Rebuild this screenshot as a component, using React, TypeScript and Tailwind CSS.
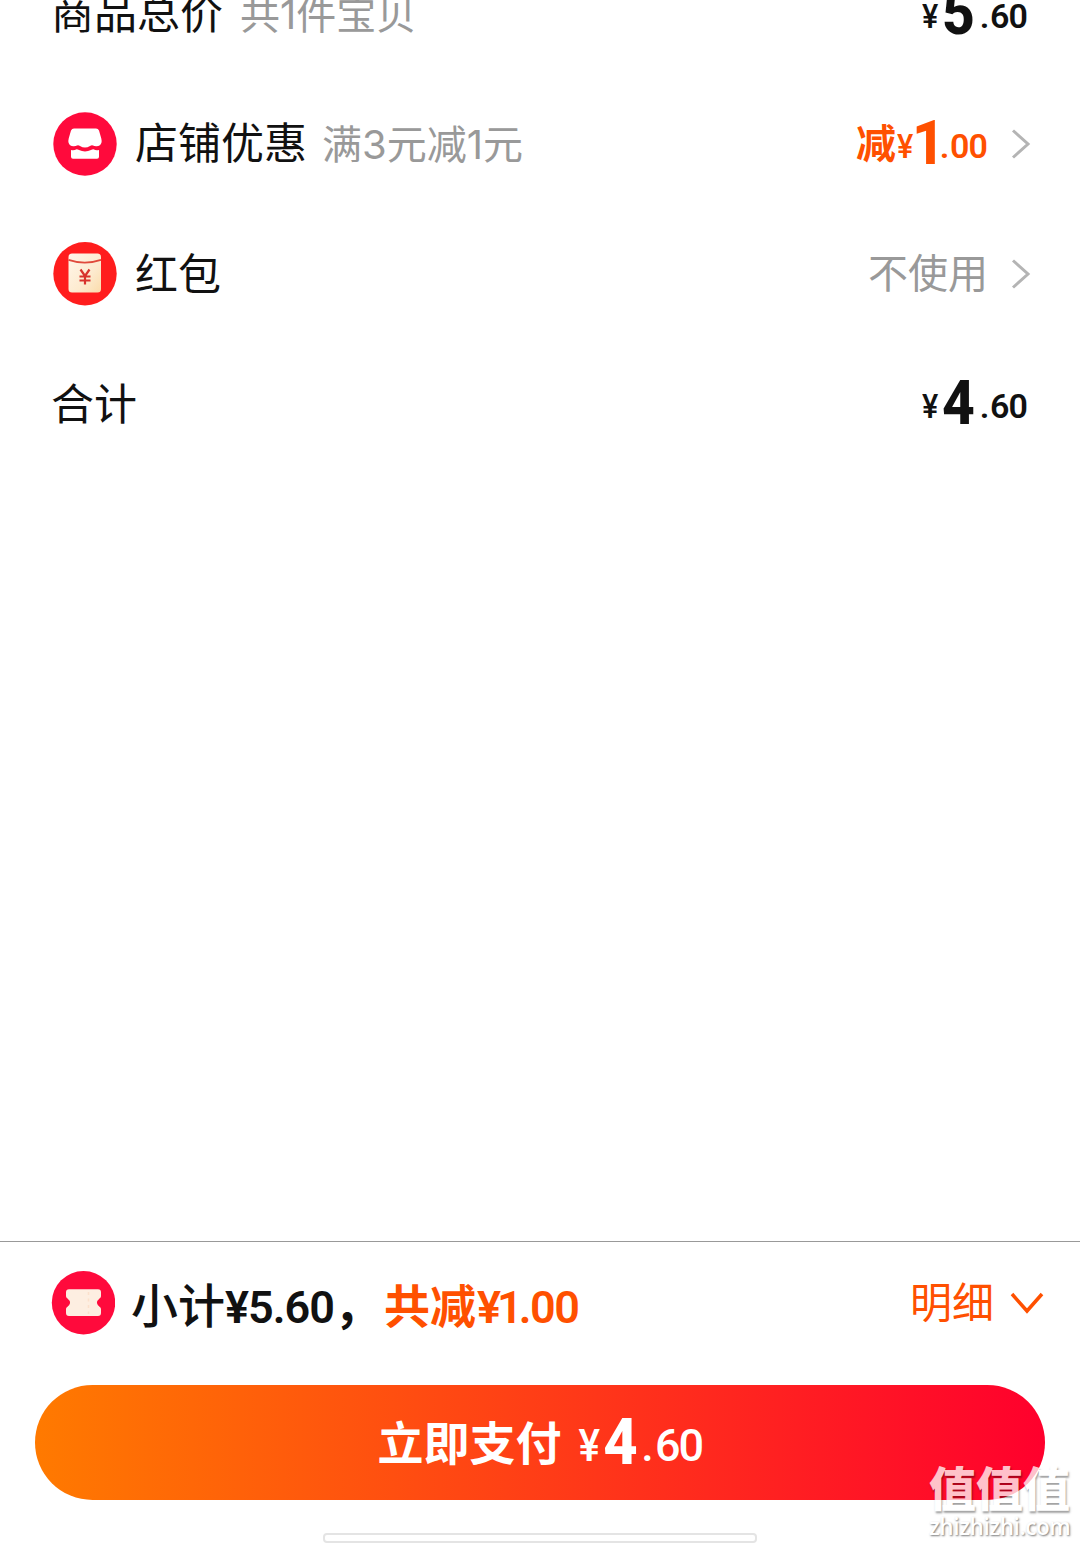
import React from 'react';

const cjk = "font-['Noto_Sans_CJK_SC',sans-serif]";
const din = "font-['Roboto',sans-serif]";
const mixed = "font-['Inter','Noto_Sans_CJK_SC',sans-serif]";

// Price with an enlarged integer part sitting slightly below the small digits
const Price: React.FC<{ whole: string; cents: string }> = ({ whole, cents }) => (
  <div className={`flex items-baseline pb-[5px] text-[34px] leading-[64px] font-semibold ${din}`}>
    <span className="w-[19px] origin-left scale-x-90 font-medium">¥</span>
    <span
      className={`origin-left translate-y-[6px] scale-x-92 text-[62px] font-extrabold ${
        whole === '1' ? '-ml-[4px] w-[27px]' : 'ml-px w-[37px]'
      }`}
    >
      {whole}
    </span>
    <span className="w-[11px] text-center">.</span>
    <span className="w-[38px] tracking-[-1px]">{cents}</span>
  </div>
);

const ChevronRight = () => (
  <svg width="20" height="32" viewBox="0 0 20 32" fill="none" stroke="#b4b4b4" strokeWidth="3">
    <path d="M2 2.5 17 16 2 29.5" />
  </svg>
);

const ShopIcon = () => (
  <svg width="64" height="64" viewBox="0 0 64 64">
    <circle cx="32" cy="32" r="31.7" fill="#ff0a3c" />
    <path fill="#fff" d="M21 16.500h22q2.200 0 3 2l2.300 8q.5 2 .2 4-.8 3.500-5 3.800-2 .1-3.500-.8-1.500-.6-3 .6-5 3-10 0-1.500-1.200-3-.6-1.500.9-3.500.8-4.200-.3-5-3.800-.3-2 .2-4l2.300-8q.8-2 3-2Z" />
    <path fill="#fff" d="M18 38q3 .8 5.500-.7 1.500 0 2.500.8 6 2.800 12 0 1-.8 2.500-.8 2.500 1.500 5.500.7v6.700q0 2-2 2H20q-2 0-2-2Z" />
  </svg>
);

const RedPacketIcon = () => (
  <svg width="64" height="64" viewBox="0 0 64 64">
    <defs>
      <linearGradient id="packet" x1="0" y1="0" x2="1" y2="1">
        <stop offset="0" stopColor="#fff6ea" />
        <stop offset="0.6" stopColor="#fdebd0" />
        <stop offset="1" stopColor="#fbdcab" />
      </linearGradient>
    </defs>
    <circle cx="32" cy="31.700" r="31.700" fill="#ff1d1d" />
    <rect x="15.500" y="11.500" width="32.500" height="39" rx="3.500" fill="url(#packet)" />
    <path d="M15.500 17.800q16.200 5.500 32.500 0" fill="none" stroke="#e04a3c" strokeWidth="1.800" />
    <path d="m27.500 27.500 4.500 6.500 4.500-6.500M32 34v8.500M26.500 34.500h11M26.500 38.500h11" fill="none" stroke="#d8322c" strokeWidth="2.200" />
  </svg>
);

const CouponIcon = () => (
  <svg width="64" height="64" viewBox="0 0 64 64">
    <circle cx="32.500" cy="31.700" r="31.700" fill="#ff0a3c" />
    <path fill="#fdeee1" d="M18 18.300h29q3 0 3 3v4q0 1.500-1.500 2.300-5 4.100 0 8.200 1.500.8 1.500 2.300v4q0 3-3 3H18q-3 0-3-3v-4q0-1.500 1.500-2.300 5-4.100 0-8.200-1.500-.8-1.500-2.300v-4q0-3 3-3Z" />
    <path d="M37.500 21v22" stroke="#fbe0cc" strokeWidth="1.500" strokeDasharray="3 3.500" />
  </svg>
);

const App: React.FC = () => {
  return (
    <div className={`flex h-[1545px] w-[1080px] flex-col overflow-hidden bg-white text-[#111] ${cjk}`}>
      {/* Price breakdown */}
      <div className="-mt-[51px] flex-1">
        <div className="flex h-[130px] items-center pl-[51px] pr-[52px]">
          <span className="pb-[8px] text-[43px] leading-[60px]">商品总价</span>
          <span className={`ml-[17px] pt-[2px] text-[40px] leading-[60px] text-[#999] ${mixed}`}>共1件宝贝</span>
          <div className="ml-auto">
            <Price whole="5" cents="60" />
          </div>
        </div>

        <div className="flex h-[130px] items-center pl-[53px] pr-[49px]">
          <ShopIcon />
          <span className="ml-[18px] pb-[8px] text-[43px] leading-[60px]">店铺优惠</span>
          <span className={`ml-[15px] pt-[2px] text-[40px] leading-[60px] text-[#999] ${mixed}`}>满3元减1元</span>
          <div className="ml-auto flex items-center text-[#ff5000]">
            <span className="mr-px pb-[6px] text-[40px] leading-[60px] font-bold">减</span>
            <Price whole="1" cents="00" />
          </div>
          <div className="ml-[23px]">
            <ChevronRight />
          </div>
        </div>

        <div className="flex h-[130px] items-center pl-[53px] pr-[49px]">
          <RedPacketIcon />
          <span className="ml-[18px] pb-[6px] text-[43px] leading-[60px]">红包</span>
          <span className="ml-auto pb-[6px] text-[40px] leading-[60px] text-[#999]">不使用</span>
          <div className="ml-[23px]">
            <ChevronRight />
          </div>
        </div>

        <div className="flex h-[130px] items-center pl-[51px] pr-[52px]">
          <span className="pb-[6px] text-[43px] leading-[60px]">合计</span>
          <div className="ml-auto">
            <Price whole="4" cents="60" />
          </div>
        </div>
      </div>

      {/* Payment bar */}
      <div className="h-[304px] border-t border-[#999]">
        <div className="flex h-[122px] items-center pl-[51px] pr-[36px]">
          <CouponIcon />
          <div className="ml-[16px] flex items-baseline pt-[4px] text-[47px] leading-[60px] font-bold whitespace-nowrap">
            <span className="w-[94px] font-medium">小计</span>
            <span className={`w-[109px] text-[45px] font-semibold tracking-[-1px] ${din}`}>¥5.60</span>
            <span className="w-[50px]">，</span>
            <span className="w-[93px] text-[46px] text-[#ff5000]">共减</span>
            <span className={`text-[45px] font-semibold text-[#ff5000] ${din}`}>
              <span className="tracking-[-4px]">¥1</span>
              <span className="tracking-[-1.500px]">.00</span>
            </span>
          </div>
          <span className="ml-auto pb-[6px] text-[42px] leading-[60px] text-[#ff5000]">明细</span>
          <svg className="ml-[16px]" width="34" height="24" viewBox="0 0 34 24" fill="none" stroke="#ff5000" strokeWidth="3.500">
            <path d="M2 3 17 20 32 3" />
          </svg>
        </div>

        <button className="mx-[35px] mt-[21px] flex h-[115px] w-[1010px] items-center justify-center rounded-full bg-linear-to-r/srgb from-[#ff7a00] to-[#ff002d] text-white">
          <span className="pb-[6px] text-[46px] leading-[60px] font-bold">立即支付</span>
          <div className={`ml-[16px] flex items-baseline pb-px text-[45px] leading-[64px] font-medium ${din}`}>
            <span className="w-[25px] origin-left scale-x-90">¥</span>
            <span className="w-[38px] origin-left translate-y-[3px] scale-x-92 text-[65px] font-extrabold">4</span>
            <span className="w-[14px] text-center">.</span>
            <span className="w-[48px] tracking-[-2px]">60</span>
          </div>
        </button>

        <div className="mx-auto mt-[33px] h-[10px] w-[434px] rounded-[4px] border-2 border-[#e4e4e4] bg-white" />
      </div>

      {/* Site watermark */}
      <div className="pointer-events-none absolute left-[929px] top-[1460px] w-[146px] text-white opacity-75">
        <div className="text-[47px] leading-[52px] font-black [text-shadow:1px_2px_2px_rgba(0,0,0,0.5)]">值值值</div>
        <div className="mt-[2px] text-[22.5px] leading-[26px] font-semibold tracking-[-0.4px] font-['Open_Sans',sans-serif] [text-shadow:1px_1px_2px_rgba(0,0,0,0.7)]">zhizhizhi.com</div>
      </div>
    </div>
  );
};

export default App;
